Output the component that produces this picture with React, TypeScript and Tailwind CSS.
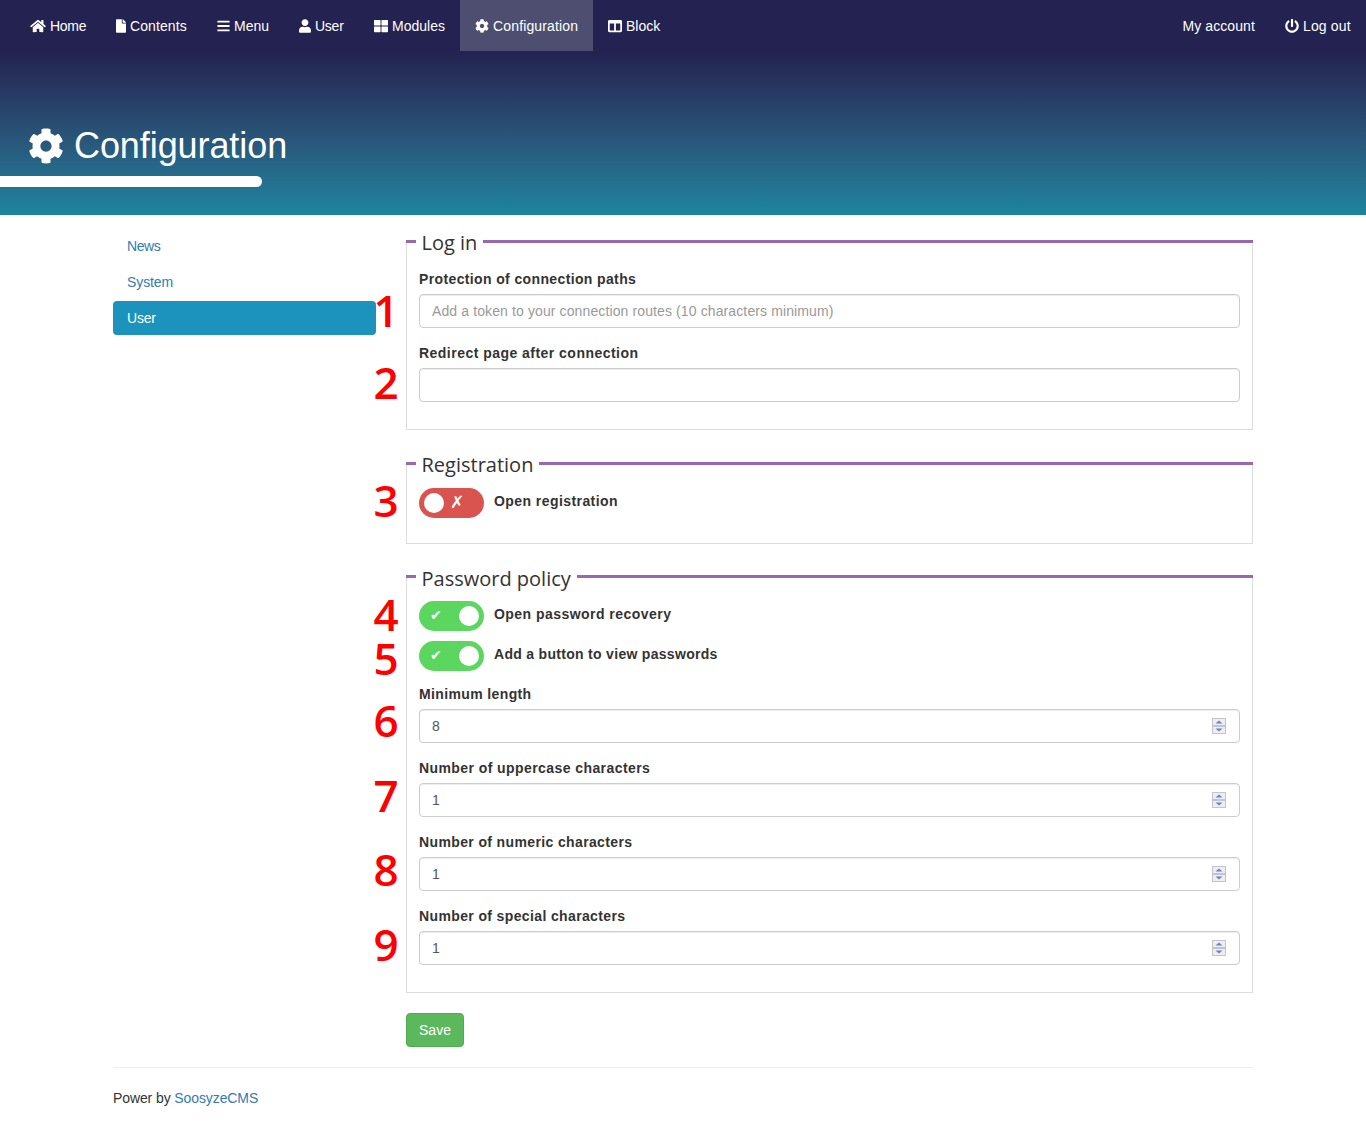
import React from "react";
import { FaHome, FaFile, FaBars, FaUser, FaThLarge, FaCog, FaColumns, FaPowerOff } from "react-icons/fa";

const navItems = [
  { label: "Home", Icon: FaHome, cls: "w-[86px]", w: "w-[16px]", t: "tracking-[-0.3px]" },
  { label: "Contents", Icon: FaFile, cls: "w-[101px]", w: "w-[10px]", t: "tracking-[0.1px]" },
  { label: "Menu", Icon: FaBars, cls: "w-[82px]", w: "w-[13px]", t: "" },
  { label: "User", Icon: FaUser, cls: "w-[75px]", w: "w-[12px]", t: "tracking-[-0.25px]" },
  { label: "Modules", Icon: FaThLarge, cls: "w-[101px]", w: "w-[14px]", t: "" },
  { label: "Configuration", Icon: FaCog, cls: "w-[133px]", w: "w-[14px]", t: "tracking-[0.15px]", active: true },
  { label: "Block", Icon: FaColumns, cls: "w-[82px]", w: "w-[14px]", t: "" },
];

function NavLink({ label, Icon, w, cls, t, active }: { label: string; Icon: any; w: string; cls: string; t: string; active?: boolean }) {
  return (
    <a className={`flex items-center h-[51px] px-[15px] text-white text-[14px] ${cls} ${active ? "bg-[#4e4f70]" : ""}`}>
      <Icon className={`${w} h-[14px] mr-[4px] shrink-0`} />
      <span className={`whitespace-nowrap ${t}`}>{label}</span>
    </a>
  );
}

function Marker({ n, className }: { n: string; className: string }) {
  return (
    <span className={`absolute left-[-46px] w-[26px] text-center text-[44px] leading-[45px] font-semibold text-[#ff0000] font-['Open_Sans',sans-serif] ${className}`}>
      {n}
    </span>
  );
}

function Fieldset({ title, children, className, titleClass }: { title: string; children: React.ReactNode; className?: string; titleClass?: string }) {
  return (
    <section className={className}>
      <div className="relative flex items-start h-[28px] -mb-[17px]">
        <div className="w-[10px] h-[3px] mt-[11px] bg-[#9a68ae]" />
        <div className={`ml-[5.5px] mr-[6px] text-[20px] leading-[28px] text-[#333] font-['Open_Sans',sans-serif] ${titleClass ?? ""}`}>{title}</div>
        <div className="flex-1 h-[3px] mt-[11px] bg-[#9a68ae]" />
      </div>
      <div className="border-x border-b border-[#ddd]">{children}</div>
    </section>
  );
}

const labelCls = "block h-[20px] mb-[5px] text-[14px] leading-[20px] font-bold text-[#333]";
const inputCls =
  "block w-full h-[34px] px-[12px] text-[14px] text-[#555] border border-[#ccc] rounded-[4px] bg-white shadow-[inset_0_1px_1px_rgba(0,0,0,0.075)] outline-none";

function TextField({ label, placeholder, marker, markerTop, t }: { label: string; placeholder?: string; marker: string; markerTop: string; t: string }) {
  return (
    <div className="relative mb-[15px]">
      <label className={`${labelCls} ${t}`}>{label}</label>
      <input type="text" readOnly placeholder={placeholder} className={`${inputCls} placeholder:text-[#999] placeholder:tracking-[0.115px]`} />
      <Marker n={marker} className={markerTop} />
    </div>
  );
}

function Spinner() {
  return (
    <svg className="absolute right-[14px] top-[34px]" width="14" height="16" viewBox="0 0 14 16">
      <rect x="0.5" y="0.5" width="13" height="7" fill="#eeeef2" stroke="#c4c4c8" />
      <rect x="0.5" y="8.5" width="13" height="7" fill="#eeeef2" stroke="#c4c4c8" />
      <path d="M7 2.5 L10.5 5.5 H3.5 Z" fill="#6c80c4" />
      <path d="M7 13.5 L10.5 10.5 H3.5 Z" fill="#6c80c4" />
    </svg>
  );
}

function NumberField({ label, value, marker, markerTop, t }: { label: string; value: string; marker: string; markerTop: string; t: string }) {
  return (
    <div className="relative mb-[15px]">
      <label className={`${labelCls} ${t}`}>{label}</label>
      <input type="number" readOnly defaultValue={value} className={`${inputCls} [appearance:textfield] [&::-webkit-inner-spin-button]:appearance-none`} />
      <Spinner />
      <Marker n={marker} className={markerTop} />
    </div>
  );
}

function Toggle({ on, label, marker, markerTop, t }: { on: boolean; label: string; marker: string; markerTop: string; t: string }) {
  return (
    <div className="relative flex items-start gap-[10px] mb-[10px]">
      <div className={`relative flex items-center w-[65px] h-[30px] rounded-[15px] shrink-0 ${on ? "bg-[#5bd75f] justify-end pr-[5px]" : "bg-[#d9534f] pl-[5px]"}`}>
        <div className="w-[20px] h-[20px] rounded-full bg-white" />
        <span className={`absolute top-[4px] leading-[20px] font-bold text-white font-['DejaVu_Sans',sans-serif] ${on ? "left-[11px] text-[14px]" : "left-[31px] text-[17px]"}`}>
          {on ? "✔" : "✗"}
        </span>
      </div>
      <span className={`mt-[3px] text-[14px] leading-[20px] font-bold text-[#333] ${t}`}>{label}</span>
      <Marker n={marker} className={markerTop} />
    </div>
  );
}

export default function App() {
  return (
    <div className="font-['Liberation_Sans',Arial,sans-serif] text-[14px] leading-[20px] text-[#333] bg-white min-h-[1138px]">
      <header className="h-[215px] bg-gradient-to-b from-[#232250] from-[24%] to-[#1c859f]">
        <nav className="flex items-center justify-between h-[51px] pl-[15px]">
          <div className="flex">
            {navItems.map((it) => (
              <NavLink key={it.label} {...it} />
            ))}
          </div>
          <div className="flex">
            <a className="flex items-center h-[51px] px-[15px] text-white tracking-[0.1px]">My account</a>
            <NavLink label="Log out" Icon={FaPowerOff} w="w-[14px]" cls="w-[96px]" t="tracking-[0.15px]" />
          </div>
        </nav>
        <h1 className="flex items-center h-[40px] mt-[75px] pl-[28px] text-[36px] leading-[40px] font-normal tracking-[-0.08px] text-white">
          <FaCog className="w-[36px] h-[36px] mr-[10px]" />
          Configuration
        </h1>
        <div className="mt-[10px] w-[262px] h-[11px] bg-white rounded-r-[6px]" />
      </header>

      <main className="w-[1140px] mx-auto pt-[14px] flex">
        <aside className="w-[263px] shrink-0 flex flex-col gap-[2px]">
          <a className="flex items-center h-[34px] px-[14px] text-[#337ab7] tracking-[-0.4px]">News</a>
          <a className="flex items-center h-[34px] px-[14px] text-[#337ab7] tracking-[-0.1px]">System</a>
          <a className="flex items-center h-[34px] px-[14px] text-white bg-[#1b93bd] rounded-[4px] tracking-[-0.2px]">User</a>
        </aside>
        <div className="ml-[30px] flex-1 min-w-0">
          <Fieldset title="Log in">
            <div className="px-[12px] pt-[29px] pb-[12px]">
              <TextField label="Protection of connection paths" placeholder="Add a token to your connection routes (10 characters minimum)" marker="1" markerTop="top-[19px]" t="tracking-[0.37px]" />
              <TextField label="Redirect page after connection" marker="2" markerTop="top-[17px]" t="tracking-[0.47px]" />
            </div>
          </Fieldset>
          <Fieldset title="Registration" className="mt-[21px]">
            <div className="px-[12px] pt-[26px] pb-[15px]">
              <Toggle on={false} label="Open registration" marker="3" markerTop="top-[-10px]" t="tracking-[0.43px]" />
            </div>
          </Fieldset>
          <Fieldset title="Password policy" className="mt-[20px]" titleClass="mt-[1px]">
            <div className="px-[12px] pt-[26px] pb-[12px]">
              <Toggle on label="Open password recovery" marker="4" markerTop="top-[-9px]" t="tracking-[0.46px]" />
              <Toggle on label="Add a button to view passwords" marker="5" markerTop="top-[-5px]" t="tracking-[0.3px]" />
              <div className="h-[3px]" />
              <NumberField label="Minimum length" value="8" marker="6" markerTop="top-[14px]" t="tracking-[0.37px]" />
              <NumberField label="Number of uppercase characters" value="1" marker="7" markerTop="top-[15px]" t="tracking-[0.42px]" />
              <NumberField label="Number of numeric characters" value="1" marker="8" markerTop="top-[15px]" t="tracking-[0.37px]" />
              <NumberField label="Number of special characters" value="1" marker="9" markerTop="top-[16px]" t="tracking-[0.37px]" />
            </div>
          </Fieldset>
          <button className="block mt-[20px] w-[58px] h-[34px] text-[14px] text-white bg-[#5cb85c] border border-[#4cae4c] rounded-[4px]">Save</button>
        </div>
      </main>

      <footer className="w-[1140px] mx-auto mt-[20px] pt-[20px] pb-[30px] border-t border-[#eee] tracking-[-0.1px]">
        Power by <a className="text-[#337ab7]">SoosyzeCMS</a>
      </footer>
    </div>
  );
}
